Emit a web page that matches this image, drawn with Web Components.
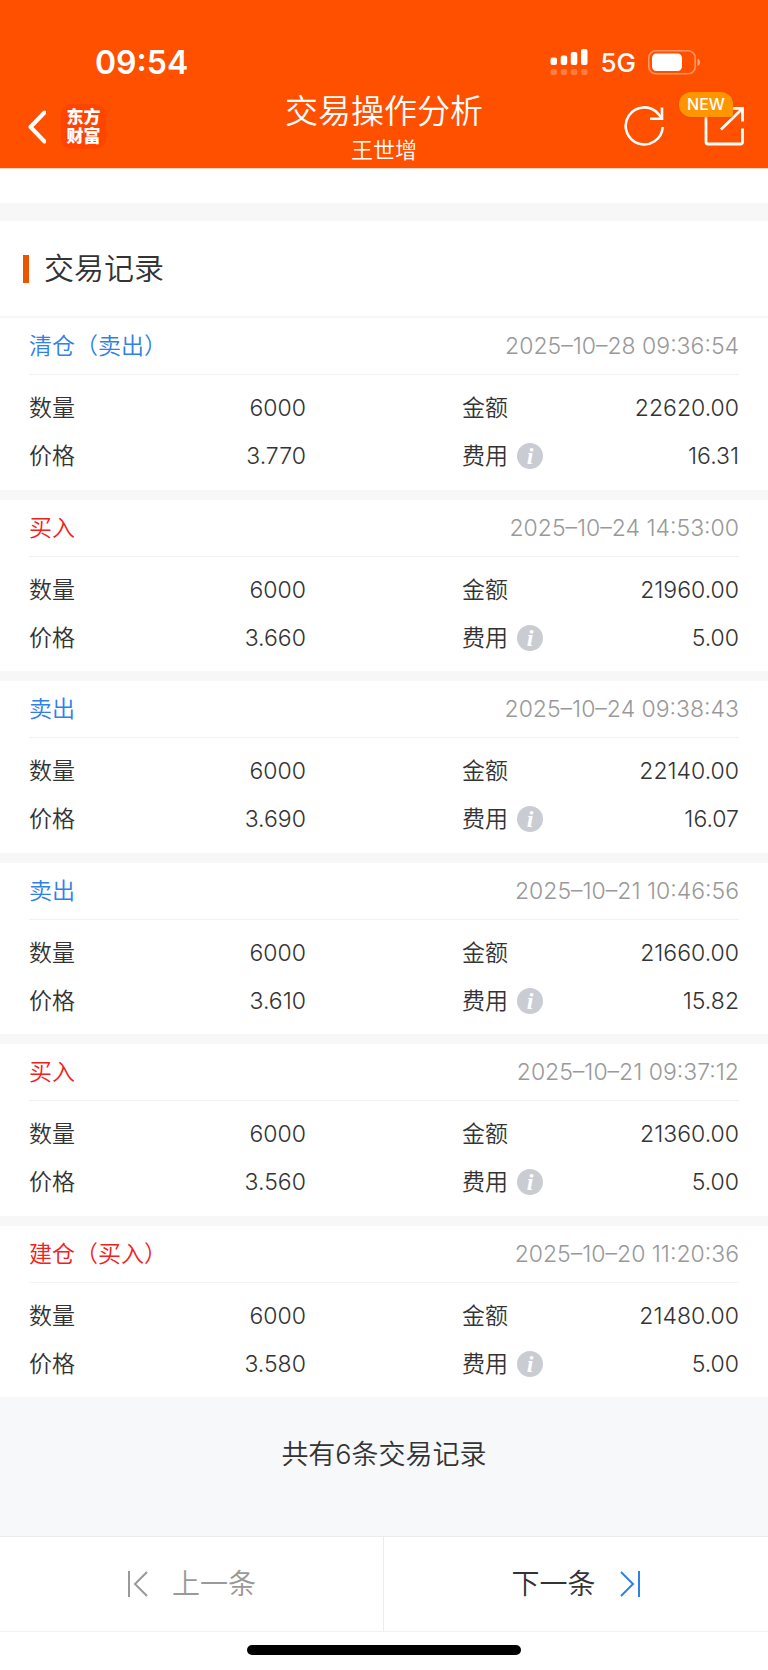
<!doctype html>
<html lang="zh-CN">

<head>
    <meta charset="utf-8">
    <meta name="viewport" content="width=device-width, initial-scale=1">

    <title>交易操作分析</title>

    <style>
        html {
            font-family: Inter, "Noto Sans CJK SC", sans-serif;
            font-size: 23px;
            font-weight: 350;
            color: #333;
            background: #fff;
        }

        body {
            margin: 0;
            min-height: 100vh;
            display: flex;
            flex-direction: column;
        }

        trade-list {
            flex: 1;
        }
    </style>
</head>

<body>
<status-bar>09:54</status-bar>
<nav-header>
    交易操作分析
    <span slot="subtitle">王世增</span>
</nav-header>
<section-title>交易记录</section-title>
<trade-list>
    <trade-record side="sell" time="2025–10–28 09:36:54" count="6000" price="3.770" amount="22620.00" fee="16.31">清仓（卖出）</trade-record>
    <trade-record side="buy" time="2025–10–24 14:53:00" count="6000" price="3.660" amount="21960.00" fee="5.00">买入</trade-record>
    <trade-record side="sell" time="2025–10–24 09:38:43" count="6000" price="3.690" amount="22140.00" fee="16.07">卖出</trade-record>
    <trade-record side="sell" time="2025–10–21 10:46:56" count="6000" price="3.610" amount="21660.00" fee="15.82">卖出</trade-record>
    <trade-record side="buy" time="2025–10–21 09:37:12" count="6000" price="3.560" amount="21360.00" fee="5.00">买入</trade-record>
    <trade-record side="buy" time="2025–10–20 11:20:36" count="6000" price="3.580" amount="21480.00" fee="5.00">建仓（买入）</trade-record>
</trade-list>
<list-summary>共有6条交易记录</list-summary>
<record-pager></record-pager>
<home-indicator></home-indicator>

<template id="status-bar">
    <style>
        :host {
            display: flex;
            align-items: center;
            justify-content: space-between;
            box-sizing: border-box;
            height: 90px;
            padding: 34px 68px 0 95px;
            background: #ff5000;
            color: #fff;
        }

        .time {
            font-size: 32px;
            font-weight: 600;
        }

        .state {
            display: flex;
            align-items: center;
            gap: 12px;
            font-size: 26px;
            font-weight: 500;
        }

        svg {
            display: block;
        }
    </style>
    <span class="time"><slot></slot></span>
    <span class="state">
        <svg width="38" height="28" viewBox="0 0 38 28" fill="#fff">
            <rect x="0.5" y="9.5" width="6.5" height="7.5" rx="2"/>
            <rect x="10.7" y="7.5" width="6.5" height="9.5" rx="2"/>
            <rect x="20.8" y="4" width="6.5" height="13" rx="2"/>
            <rect x="31" y="1" width="6.5" height="16" rx="2"/>
            <g opacity=".25">
                <rect x="0.5" y="21" width="6.5" height="6" rx="2"/>
                <rect x="10.7" y="21" width="6.5" height="6" rx="2"/>
                <rect x="20.8" y="21" width="6.5" height="6" rx="2"/>
                <rect x="31" y="21" width="6.5" height="6" rx="2"/>
            </g>
        </svg>
        5G
        <svg width="52" height="26" viewBox="0 0 52 26">
            <rect x="0.8" y="1.8" width="46.4" height="23" rx="7" fill="none" stroke="#fff" stroke-opacity=".4" stroke-width="1.6"/>
            <rect x="4" y="4.5" width="30" height="17.5" rx="4.5" fill="#fff"/>
            <path d="M49.5 9.5c3.4 1.6 3.4 6 0 7.5z" fill="#fff" fill-opacity=".5"/>
        </svg>
    </span>
</template>

<template id="nav-header">
    <style>
        :host {
            display: grid;
            grid-template-columns: 1fr auto 1fr;
            height: 78px;
            background: #ff5000;
            border-bottom: 1px solid #ffd3bf;
            color: #fff;
        }

        .side {
            display: flex;
            align-items: center;
            gap: 15px;
            padding: 0 24px 5px 28px;
        }

        .actions {
            justify-content: flex-end;
            gap: 39px;
            padding-bottom: 6px;
        }

        button {
            position: relative;
            padding: 0;
            border: 0;
            background: none;
            color: inherit;
            font: inherit;
        }

        svg {
            display: block;
            fill: none;
            stroke: currentColor;
        }

        .logo {
            box-sizing: border-box;
            width: 45px;
            height: 45px;
            padding-top: 4px;
            border-radius: 10px;
            background: #ff4400;
            color: #fff;
            font-size: 17px;
            font-weight: 900;
            line-height: 19px;
            text-align: center;
            text-decoration: none;
        }

        h1 {
            margin: 0;
            font-size: 33px;
            font-weight: inherit;
            line-height: 42px;
            text-align: center;
        }

        .subtitle {
            font-size: 22px;
            line-height: 36px;
            text-align: center;
        }

        /* sits over the top left corner of the share icon */
        .badge {
            position: absolute;
            right: 11px;
            bottom: 29px;
            width: 54px;
            border-radius: 12px 12px 3px 12px;
            background: #ff9500;
            box-shadow: 0 1px 3px #e0400088;
            font-size: 16px;
            font-weight: 500;
            line-height: 25px;
            text-align: center;
        }
    </style>
    <div class="side">
        <button type="button" aria-label="返回">
            <svg width="18" height="34" viewBox="0 0 18 34" stroke-width="4" stroke-linecap="round" stroke-linejoin="round">
                <path d="M16.5 2.5L2.5 17l14 14.5"/>
            </svg>
        </button>
        <a class="logo" href="#">东方<br>财富</a>
    </div>
    <div>
        <h1><slot></slot></h1>
        <div class="subtitle"><slot name="subtitle"></slot></div>
    </div>
    <div class="side actions">
        <button type="button" aria-label="刷新">
            <svg width="41" height="40" viewBox="0 0 41 40" stroke-width="2.6">
                <path d="M38.7 21a18.5 18.5 0 1 1-4.5-13.2L38 12.5"/>
                <path d="M38 1.5v11.3H26"/>
            </svg>
        </button>
        <button type="button" aria-label="分享">
            <svg width="40" height="40" viewBox="0 0 40 40" stroke-width="2.8">
                <path d="M2 8v28a2 2 0 0 0 2 2h32.5a2 2 0 0 0 2-2V22.5"/>
                <path d="M26 2.4h12.5v13.1M38 3L17 23.5"/>
            </svg>
            <span class="badge">NEW</span>
        </button>
    </div>
</template>

<template id="section-title">
    <style>
        :host {
            display: block;
            padding-top: 34px;
        }

        h2 {
            display: flex;
            align-items: center;
            gap: 15px;
            margin: 0;
            padding: 0 23px;
            border-top: 18px solid #f7f7f7;
            border-bottom: 2px solid #f7f7f7;
            font-size: 30px;
            font-weight: inherit;
            line-height: 95px;
        }

        h2::before {
            content: "";
            width: 6px;
            height: 28px;
            background: #ec5500;
        }
    </style>
    <h2><slot></slot></h2>
</template>

<template id="trade-list">
    <style>
        :host {
            display: grid;
            grid-auto-rows: 1fr;
            gap: 10px;
            background: #f7f7f7;
        }
    </style>
    <slot></slot>
</template>

<template id="trade-record">
    <style>
        :host {
            display: block;
            padding: 0 29px;
            background: #fff;
            --side: #2f80e8;
        }

        :host([side="buy"]) {
            --side: #f32020;
        }

        header {
            display: flex;
            justify-content: space-between;
            border-bottom: 1px solid #f2f2f2;
            line-height: 56px;
        }

        .side {
            color: var(--side);
        }

        time {
            color: #999;
        }

        dl {
            display: grid;
            grid-template-columns: 39% 39%;
            justify-content: space-between;
            margin: 0;
            padding: 9px 0;
            line-height: 48px;
        }

        dl div {
            display: flex;
            align-items: center;
        }

        dd {
            margin: 0 0 0 auto;
        }

        button {
            width: 26px;
            height: 26px;
            margin-left: 9px;
            padding: 0;
            border: 0;
            border-radius: 50%;
            background: #c9ccd2;
            color: #fff;
            font: italic bold 24px/26px "Liberation Serif", serif;
        }
    </style>
    <header>
        <span class="side"><slot></slot></span>
        <time></time>
    </header>
    <dl>
        <div><dt>数量</dt><dd data-field="count"></dd></div>
        <div><dt>金额</dt><dd data-field="amount"></dd></div>
        <div><dt>价格</dt><dd data-field="price"></dd></div>
        <div><dt>费用</dt><button type="button" aria-label="费用说明">i</button><dd data-field="fee"></dd></div>
    </dl>
</template>

<template id="list-summary">
    <style>
        :host {
            display: block;
            padding: 38px 0 61px;
            background: #f7f8fa;
            font-size: 27px;
            line-height: 40px;
            text-align: center;
        }
    </style>
    <slot></slot>
</template>

<template id="record-pager">
    <style>
        :host {
            display: grid;
            grid-template-columns: 1fr 1fr;
            border-top: 1px solid #ececec;
            border-bottom: 1px solid #f2f2f2;
        }

        button {
            display: flex;
            align-items: center;
            justify-content: center;
            gap: 24px;
            padding: 0;
            border: 0;
            background: #fff;
            color: #333;
            font: inherit;
            font-size: 28px;
            line-height: 94px;
        }

        button:disabled {
            border-right: 1px solid #ececec;
            color: #999;
        }

        svg {
            fill: none;
            stroke: currentColor;
            stroke-width: 2;
        }

        .next svg {
            color: #2f80e8;
        }
    </style>
    <button type="button" disabled>
        <svg width="21" height="28" viewBox="0 0 21 28"><path d="M2 1v26M20 2L8 14l12 12"/></svg>
        上一条
    </button>
    <button type="button" class="next">
        下一条
        <svg width="21" height="28" viewBox="0 0 21 28"><path d="M19 1v26M1 2l12 12L1 26"/></svg>
    </button>
</template>

<template id="home-indicator">
    <style>
        :host {
            display: flex;
            justify-content: center;
            padding: 13px 0 15px;
        }

        div {
            width: 274px;
            height: 10px;
            border-radius: 5px;
            background: #000;
        }
    </style>
    <div></div>
</template>

<script>
    // clones the template that has the same id as the element's tag
    class BaseElement extends HTMLElement {
        constructor() {
            super();
            const tpl = document.getElementById(this.localName);
            this.attachShadow({mode: 'open'}).appendChild(tpl.content.cloneNode(true));
        }
    }

    customElements.define('status-bar', class extends BaseElement {});
    customElements.define('nav-header', class extends BaseElement {});
    customElements.define('section-title', class extends BaseElement {});
    customElements.define('trade-list', class extends BaseElement {});
    customElements.define('list-summary', class extends BaseElement {});
    customElements.define('record-pager', class extends BaseElement {});
    customElements.define('home-indicator', class extends BaseElement {});

    customElements.define('trade-record', class extends BaseElement {
        connectedCallback() {
            this.shadowRoot.querySelector('time').textContent = this.getAttribute('time');
            this.shadowRoot.querySelectorAll('[data-field]').forEach(el => {
                el.textContent = this.getAttribute(el.dataset.field);
            });
        }
    });
</script>
</body>

</html>
